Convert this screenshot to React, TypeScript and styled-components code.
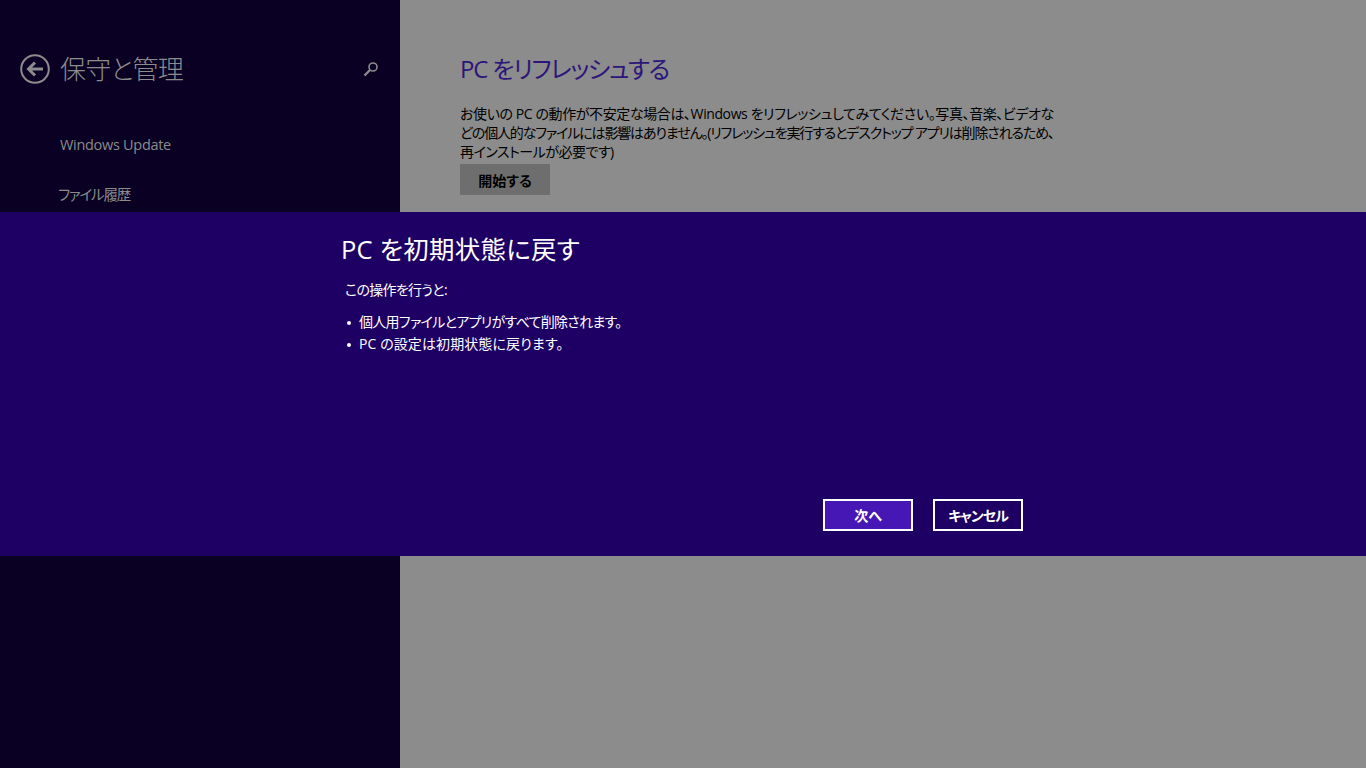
import React from 'react';
import styled, {createGlobalStyle} from "styled-components";

const FONT = `"Open Sans", "Noto Sans CJK JP", sans-serif`;

const GlobalStyle = createGlobalStyle`
  html, body {
    margin: 0;
    padding: 0;
    height: 100%;
    overflow: hidden;
    background: #8c8c8c;
    font-family: ${FONT};
    font-feature-settings: "palt";
  }
`

const BackIcon = () => (
    <svg width="30" height="30" viewBox="0 0 30 30" fill="none">
        <circle cx="15" cy="15" r="13.8" stroke="#8c8c8c" strokeWidth="2"/>
        <path d="M23 15H9M15 8.5L8.5 15l6.5 6.5" stroke="#8c8c8c" strokeWidth="3"/>
    </svg>
);

const SearchIcon = () => (
    <svg width="16" height="16" viewBox="0 0 16 16" fill="none">
        <circle cx="10" cy="6" r="4" stroke="#8c8c8c" strokeWidth="1.6"/>
        <path d="M7 9L1.5 14.5" stroke="#8c8c8c" strokeWidth="2.4"/>
    </svg>
);

export default function App() {
    return (
        <Page>
            <GlobalStyle/>
            <Sidebar>
                <SideHeader>
                    <BackIcon/>
                    <SideTitle>保守と管理</SideTitle>
                    <SearchSlot><SearchIcon/></SearchSlot>
                </SideHeader>
                <NavItem>Windows Update</NavItem>
                <NavItem $narrow>ファイル履歴</NavItem>
            </Sidebar>
            <Content>
                <Heading>PC をリフレッシュする</Heading>
                <Paragraph>
                    <Line $spacing={-0.4}>お使いの PC の動作が不安定な場合は、Windows をリフレッシュしてみてください。写真、音楽、ビデオな</Line>
                    <Line $spacing={-1.15}>どの個人的なファイルには影響はありません。(リフレッシュを実行するとデスクトップ アプリは削除されるため、</Line>
                    <Line $spacing={-0.5}>再インストールが必要です)</Line>
                </Paragraph>
                <StartButton>開始する</StartButton>
            </Content>
            <Dialog>
                <DialogInner>
                    <DialogTitle>PC を初期状態に戻す</DialogTitle>
                    <DialogLead>この操作を行うと:</DialogLead>
                    <BulletList>
                        <Bullet $spacing={-0.7}>個人用ファイルとアプリがすべて削除されます。</Bullet>
                        <Bullet $spacing={0.1}>PC の設定は初期状態に戻ります。</Bullet>
                    </BulletList>
                    <Actions>
                        <ActionButton $primary>次へ</ActionButton>
                        <ActionButton $spacing={-1}>キャンセル</ActionButton>
                    </Actions>
                </DialogInner>
            </Dialog>
        </Page>
    );
}

const Page = styled.div`
  position: relative;
  display: flex;
  width: 1366px;
  height: 768px;
  overflow: hidden;
`
const Sidebar = styled.aside`
  width: 400px;
  flex-shrink: 0;
  box-sizing: border-box;
  padding: 54px 20px 0;
  background: #090024;
`
const SideHeader = styled.div`
  display: flex;
  align-items: center;
  height: 30px;
  margin-bottom: 50px;
`
const SideTitle = styled.h1`
  margin: 0 0 0 10px;
  font-size: 26px;
  font-weight: 300;
  line-height: 30px;
  letter-spacing: -0.8px;
  color: #8c8c8c;
`
const SearchSlot = styled.div`
  display: flex;
  margin-left: auto;
  margin-right: 1px;
`
const NavItem = styled.div<{$narrow?: boolean}>`
  height: 50px;
  margin-left: ${p => p.$narrow ? "38px" : "40px"};
  font-size: 14.5px;
  line-height: 22px;
  letter-spacing: ${p => p.$narrow ? "-1.2px" : "-0.3px"};
  color: #8c8c8c;
`
const Content = styled.main`
  flex: 1;
  box-sizing: border-box;
  padding: 52px 0 0 60px;
  background: #8c8c8c;
`
const Heading = styled.h2`
  margin: 0 0 18px;
  font-size: 24px;
  font-weight: 400;
  line-height: 34px;
  letter-spacing: -1.2px;
  color: #2c1679;
`
const Paragraph = styled.div`
  margin-bottom: 3px;
  font-size: 14px;
  line-height: 19px;
  color: #000;
`
const Line = styled.div<{$spacing: number}>`
  white-space: nowrap;
  letter-spacing: ${p => p.$spacing}px;
`
const StartButton = styled.button`
  display: block;
  width: 90px;
  height: 31px;
  padding: 0;
  border: 0;
  background: #6e6e6e;
  color: #000;
  font-family: ${FONT};
  font-feature-settings: "palt";
  font-size: 14px;
  font-weight: 700;
`
const Dialog = styled.section`
  position: absolute;
  left: 0;
  right: 0;
  top: 212px;
  height: 344px;
  background: #1e0064;
  color: #fff;
`
const DialogInner = styled.div`
  display: flex;
  flex-direction: column;
  width: 682px;
  height: 100%;
  box-sizing: border-box;
  margin-left: 341px;
  padding-top: 19px;
`
const DialogTitle = styled.h2`
  margin: 0 0 13px;
  font-size: 25.5px;
  font-weight: 400;
  line-height: 36px;
  letter-spacing: 0.2px;
`
const DialogLead = styled.p`
  margin: 0 0 11px 4px;
  font-size: 14px;
  line-height: 20px;
  letter-spacing: -0.7px;
`
const BulletList = styled.ul`
  margin: 0;
  padding: 0 0 0 18px;
  list-style: none;
`
const Bullet = styled.li<{$spacing: number}>`
  position: relative;
  font-size: 14px;
  line-height: 22px;
  letter-spacing: ${p => p.$spacing}px;

  &::before {
    content: "";
    position: absolute;
    left: -12px;
    top: 10px;
    width: 4px;
    height: 4px;
    border-radius: 50%;
    background: #fff;
  }
`
const Actions = styled.div`
  display: flex;
  justify-content: flex-end;
  gap: 20px;
  margin-top: auto;
  margin-bottom: 25px;
`
const ActionButton = styled.button<{$primary?: boolean; $spacing?: number}>`
  width: 90px;
  height: 32px;
  padding: 0;
  box-sizing: border-box;
  border: 2px solid #fff;
  background: ${p => p.$primary ? "#4617b4" : "#1e0064"};
  color: #fff;
  font-family: ${FONT};
  font-feature-settings: "palt";
  font-size: 14px;
  font-weight: 700;
  letter-spacing: ${p => p.$spacing ?? 0}px;
`
